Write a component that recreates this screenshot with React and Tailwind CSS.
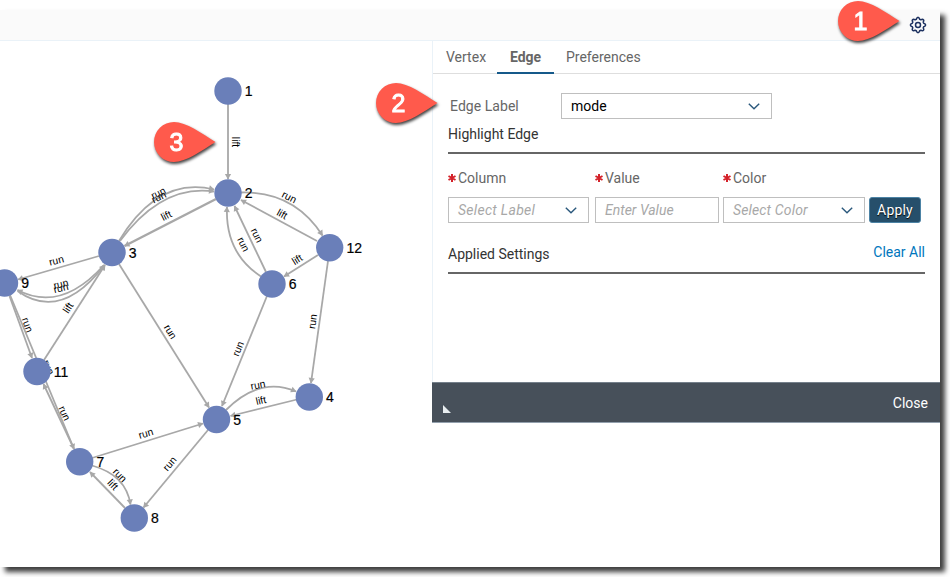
import React from "react";

const nodes = [
  ["1", 228, 91], ["2", 228, 193], ["3", 112, 252.5], ["12", 329.7, 247.7],
  ["6", 272, 284], ["9", 4.5, 283], ["11", 37, 371.5], ["7", 79.7, 461.7],
  ["5", 216.5, 419.5], ["4", 309.3, 397], ["8", 134.3, 518],
];

// [start, end] for straight edges, [start, control, end] for curved ones
const edges = [
  [[228, 104], [228, 179]],
  [[216, 199], [124.5, 246]],
  [[119, 241], [158, 176], [214, 189.5]],
  [[120, 241], [162, 184], [214, 191.5]],
  [[241, 192.5], [294, 191], [322.5, 235.5]],
  [[317, 241], [241, 200]],
  [[266, 272], [234.5, 206]],
  [[261, 276.5], [225, 253], [227, 207]],
  [[318, 255], [284, 276.5]],
  [[328, 261], [311, 383]],
  [[267, 296], [222, 406]],
  [[99, 256], [18, 279.5]],
  [[104, 265], [61, 313], [17.5, 290]],
  [[17.5, 291], [61, 322], [104.5, 265]],
  [[44, 360], [105, 265]],
  [[9.5, 296], [32, 358]],
  [[10, 295], [74, 449]],
  [[74, 449], [43.5, 384]],
  [[92, 458], [203, 423.5]],
  [[119, 264], [209, 407.5]],
  [[208, 430], [143.5, 507.5]],
  [[92, 465.5], [126, 475], [130.5, 504.5]],
  [[125, 508], [90, 472]],
  [[226, 410], [260, 376], [296, 391.5]],
  [[297, 399.5], [230.5, 416]],
];

const labels = [
  ["lift", 235, 142, 90], ["run", 289, 197.5, 27], ["lift", 282, 214.5, 28],
  ["run", 158.5, 193.5, -27], ["run", 159, 197.5, -27], ["lift", 166.5, 216, -27],
  ["run", 256.5, 235.5, 64], ["run", 243, 244.5, 64], ["lift", 297.5, 260, -32],
  ["run", 313, 321.5, -82], ["run", 238.5, 349, -68], ["run", 56.5, 261, -14],
  ["run", 61, 284.5, -14], ["run", 61, 288.5, -14], ["lift", 68.5, 308, -57],
  ["run", 170, 332, 58], ["run", 27, 325, 70], ["run", 48, 367.5, 67],
  ["run", 64, 413.5, 65], ["run", 146, 434, -17], ["run", 170, 464, -50],
  ["run", 119.5, 475.5, 46], ["lift", 112.5, 485, 46], ["run", 258, 385.5, -11],
  ["lift", 261, 401, -13],
];

function Edge({ points, wide }) {
  const end = points[points.length - 1];
  const prev = points[points.length - 2];
  const angle = (Math.atan2(end[1] - prev[1], end[0] - prev[0]) * 180) / Math.PI;
  const d = points.length === 2
    ? `M${points[0]} L${end}`
    : `M${points[0]} Q${points[1]} ${end}`;
  return (
    <g>
      <path d={d} fill="none" stroke="#a8a8a8" strokeWidth={wide ? 2.5 : 1.8} />
      <path d="M0.5 0L-5 -3.1V3.1Z" fill="#a8a8a8" transform={`translate(${end}) rotate(${angle})`} />
    </g>
  );
}

function Graph() {
  return (
    <svg className="h-[526px] w-[432px] shrink-0 font-['Liberation_Sans',Arial,sans-serif]" viewBox="0 41 432 526">
      {edges.map((p, i) => <Edge key={i} points={p} wide={i === 1} />)}
      {labels.map(([t, x, y, a], i) => (
        <text key={i} transform={`translate(${x} ${y}) rotate(${a})`} y="3" textAnchor="middle" fontSize="10.3" fill="#000">{t}</text>
      ))}
      {nodes.map(([id, x, y]) => (
        <g key={id}>
          <circle cx={x} cy={y} r="13.7" fill="#6a7fb9" />
          <text x={x + 16.8} y={y + 5} fontSize="14" fill="#000" stroke="#000" strokeWidth="0.2">{id}</text>
        </g>
      ))}
    </svg>
  );
}

function Pin({ label, className }) {
  return (
    <svg className={`absolute h-[50px] w-[70px] overflow-visible drop-shadow-[1px_2px_1.5px_rgba(0,0,0,0.75)] ${className}`} viewBox="0 0 70 50">
      <path d="M20 0A20 20 0 1 0 20 40C32 40 48 28.5 61.5 20C48 11.5 32 0 20 0Z" fill="#ff5a4c" />
      <text x="22.5" y="28.6" textAnchor="middle" fontSize="25" fill="#fff" stroke="#fff" strokeWidth="1" fontFamily="Liberation Sans, Arial, sans-serif">{label}</text>
    </svg>
  );
}

function Gear() {
  const points = [];
  for (let i = 0; i < 64; i++) {
    const t = (i / 64) * Math.PI * 2;
    const r = 6.7 + 0.8 * Math.tanh(2.5 * Math.cos(8 * t));
    points.push(`${(9 + r * Math.cos(t)).toFixed(2)},${(9 + r * Math.sin(t)).toFixed(2)}`);
  }
  return (
    <svg className="size-[18px]" viewBox="0 0 18 18" fill="none" stroke="#1d3160" strokeWidth="1.5" strokeLinejoin="round">
      <polygon points={points.join(" ")} />
      <circle cx="9" cy="9" r="2.5" />
    </svg>
  );
}

function Chevron() {
  return (
    <svg className="h-[7px] w-[12px]" viewBox="0 0 12 7" fill="none" stroke="#2a587c" strokeWidth="1.4">
      <path d="M0.8 0.8L6 5.8L11.2 0.8" />
    </svg>
  );
}

function Field({ text, className, select }) {
  return (
    <div className={`flex h-[26px] items-center justify-between border border-[#bfbfbf] bg-white pl-[9px] pr-[11px] ${className}`}>
      <span>{text}</span>
      {select && <Chevron />}
    </div>
  );
}

function Required({ text, className }) {
  return (
    <div className={`flex items-center text-[#666] ${className}`}>
      <svg className="mr-[2px] size-[8px]" viewBox="0 0 8 8" stroke="#d4222a" strokeWidth="2">
        <path d="M4 0V8M0.5 2L7.5 6M7.5 2L0.5 6" />
      </svg>
      <span>{text}</span>
    </div>
  );
}

function Panel() {
  return (
    <div className="flex h-[382px] w-[508px] shrink-0 flex-col">
      <div className="flex h-[341px] flex-col border-l border-[#eaf2f8]">
        <div className="flex h-[33px] shrink-0 border-b border-[#dedede] pl-[13px] text-[#666]">
          <div className="flex w-[51px] items-center pb-px">Vertex</div>
          <div className="flex h-[33px] w-[57px] items-center justify-center border-b-2 border-[#15598a] font-bold">Edge</div>
          <div className="ml-[12px] flex items-center pb-px">Preferences</div>
        </div>
        <div className="flex flex-col pl-[15px] pr-[15px] pt-[19px]">
          <div className="flex h-[26px] items-center">
            <span className="w-[113px] pl-[2px] tracking-[0.05px] text-[#666]">Edge Label</span>
            <Field text="mode" select className="w-[211px] text-black" />
          </div>
          <div className="flex h-[35px] items-center border-b-2 border-[#666] pb-[3px] text-[#333]">Highlight Edge</div>
          <div className="flex h-[43px] items-center pt-[4px]">
            <Required text="Column" className="w-[147px]" />
            <Required text="Value" className="w-[128px]" />
            <Required text="Color" className="w-[100px]" />
          </div>
          <div className="flex h-[26px] items-center text-[#a8a8a8]">
            <Field text={<i>Select Label</i>} select className="w-[141px] tracking-[0.3px]" />
            <Field text={<i>Enter Value</i>} className="ml-[6px] w-[124px]" />
            <Field text={<i>Select Color</i>} select className="ml-[4px] w-[142px] tracking-[0.15px]" />
            <button className="ml-[4px] h-[26px] w-[52px] rounded-[3px] border border-[#4c83a5] bg-[#264f6b] tracking-[0.2px] text-white [text-shadow:0_1px_1px_#000]">Apply</button>
          </div>
          <div className="flex h-[51px] items-center justify-between border-b-2 border-[#666] pt-[12px]">
            <span className="text-[#333]">Applied Settings</span>
            <span className="pb-[3px] text-[#0076bd]">Clear All</span>
          </div>
        </div>
      </div>
      <div className="flex h-[41px] shrink-0 items-center justify-between border-y border-t-[#75808b] border-b-[#93a0ad] bg-[#47505a] pl-[11px] pr-[12px] text-white">
        <svg className="mt-[13px] size-[8px]" viewBox="0 0 8 8"><path d="M0 0L8 8H0Z" fill="#e8edf0" /></svg>
        <span>Close</span>
      </div>
    </div>
  );
}

export default function App() {
  return (
    <div className="relative h-[577px] w-[950px] overflow-hidden bg-white pt-[10px] font-[Roboto,sans-serif] text-[14px] leading-[18px]">
      <div className="h-[557px] w-[940px] bg-white shadow-[5px_5px_5px_rgba(0,0,0,0.76)]">
        <header className="flex h-[31px] items-center justify-end border-b border-[#eaf2f8] bg-[#fafafa] pr-[13px]">
          <Gear />
        </header>
        <div className="flex items-start">
          <Graph />
          <Panel />
        </div>
      </div>
      <Pin label="1" className="left-[838px] top-px" />
      <Pin label="2" className="left-[376px] top-[83px]" />
      <Pin label="3" className="left-[154px] top-[122px]" />
    </div>
  );
}
